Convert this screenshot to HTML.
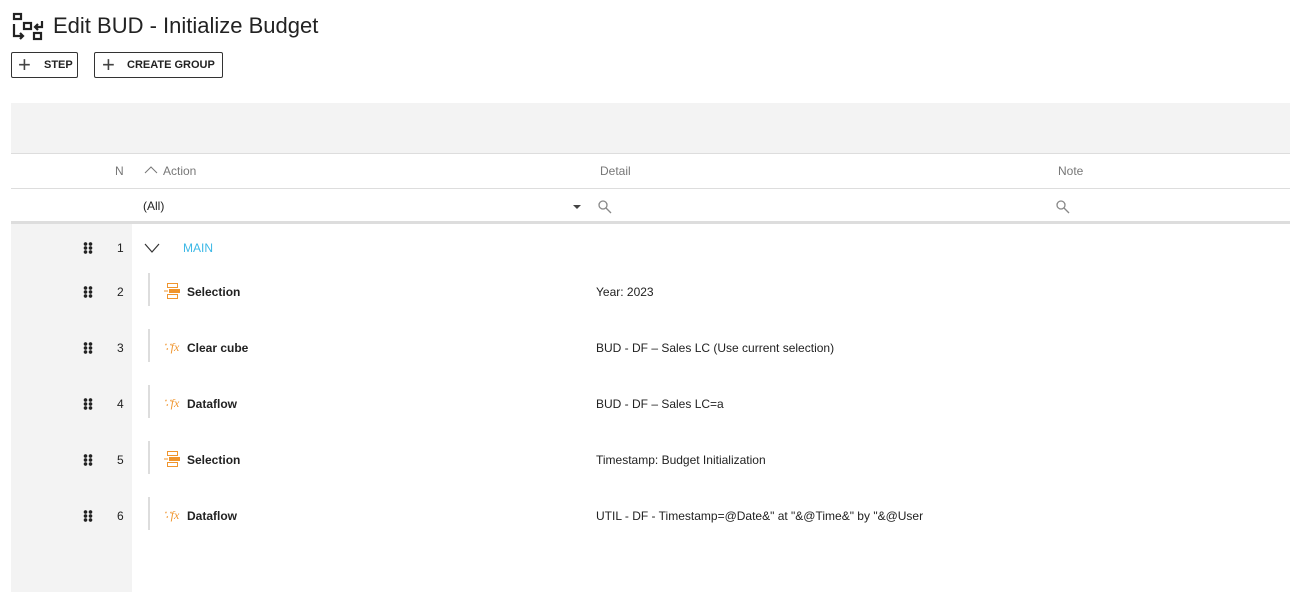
<!DOCTYPE html><html><head><style>
body{margin:0;width:1290px;height:592px;background:#fff;font-family:"Liberation Sans",sans-serif;position:relative;overflow:hidden;color:#222}
.a{position:absolute}
.btn{position:absolute;top:52px;border:1px solid #333;border-radius:2px;font-size:11px;font-weight:bold;line-height:24px;box-sizing:border-box;height:26px}
.t{font-size:12px}
.b{font-weight:bold}
.g{color:#777;font-size:12px}
.dots{position:absolute;left:83px;width:10px;height:12px;background:radial-gradient(circle,#222 1.6px,transparent 2px) 0 0/5px 4px}
</style></head><body>
<svg class="a" style="left:12px;top:12px" width="32" height="29" viewBox="0 0 32 29" fill="none" stroke="#222" stroke-width="2.2">
<rect x="2" y="2" width="7" height="5"/><rect x="12" y="11" width="7" height="6"/><rect x="22" y="21" width="7" height="6"/>
<path d="M2 12v12h9M8 21l3 3-3 3"/><path d="M30 9v6h-7M26 12l-3 3 3 3"/></svg>
<div class="a" style="left:53px;top:13px;font-size:22px;color:#222">Edit BUD - Initialize Budget</div>
<div class="btn" style="left:11px;width:67px"><span style="font-size:22px;font-weight:normal;position:absolute;left:6px;top:0px;color:#444">+</span><span style="position:absolute;left:32px">STEP</span></div>
<div class="btn" style="left:94px;width:129px"><span style="font-size:22px;font-weight:normal;position:absolute;left:7px;top:0px;color:#444">+</span><span style="position:absolute;left:32px">CREATE GROUP</span></div>
<div class="a" style="left:11px;top:103px;width:1279px;height:50px;background:#f3f3f3;border-bottom:1px solid #ddd"></div>
<div class="a g" style="left:115px;top:164px">N</div>
<svg class="a" style="left:144px;top:165px" width="14" height="9"><path d="M1 8l6-6 6 6" fill="none" stroke="#777"/></svg>
<div class="a g" style="left:163px;top:164px">Action</div>
<div class="a g" style="left:600px;top:164px">Detail</div>
<div class="a g" style="left:1058px;top:164px">Note</div>
<div class="a" style="left:11px;top:188px;width:1279px;height:1px;background:#ddd"></div>
<div class="a t" style="left:143px;top:199px">(All)</div>
<div class="a" style="left:573px;top:205px;border:4px solid transparent;border-top:4px solid #444;border-bottom:0"></div>
<svg class="a" style="left:598px;top:200px" width="14" height="14"><circle cx="5" cy="5" r="4" fill="none" stroke="#888" stroke-width="1.3"/><path d="M8 8l5 5" stroke="#888" stroke-width="1.3"/></svg>
<svg class="a" style="left:1056px;top:200px" width="14" height="14"><circle cx="5" cy="5" r="4" fill="none" stroke="#888" stroke-width="1.3"/><path d="M8 8l5 5" stroke="#888" stroke-width="1.3"/></svg>
<div class="a" style="left:11px;top:221px;width:1279px;height:3px;background:#ddd"></div>
<div class="a" style="left:11px;top:224px;width:121px;height:368px;background:#f3f3f3"></div>

<div class="dots" style="top:242px"></div><div class="a t" style="left:117px;top:241px">1</div>
<svg class="a" style="left:144px;top:243px" width="16" height="10"><path d="M1 1l7 8 7-8" fill="none" stroke="#333" stroke-width="1.2"/></svg>
<div class="a t" style="left:183px;top:241px;color:#3cb8e6">MAIN</div>

<div id="rows"></div>
<script>
var r=[["Selection","Year: 2023",0],["Clear cube","BUD - DF – Sales LC (Use current selection)",1],["Dataflow","BUD - DF – Sales LC=a",1],["Selection","Timestamp: Budget Initialization",0],["Dataflow","UTIL - DF - Timestamp=@Date&\" at \"&@Time&\" by \"&@User",1]];
var h="";r.forEach(function(x,i){var y=291+56*i;
h+='<div class="dots" style="top:'+(y-5)+'px"></div><div class="a t" style="left:117px;top:'+(y-6)+'px">'+(i+2)+'</div>';
h+='<div class="a" style="left:148px;top:'+(y-18)+'px;width:2px;height:33px;background:#ddd"></div>';
if(x[2])h+='<div class="a" style="left:163px;top:'+(y-7)+'px;font-size:12px;font-style:italic;color:#f0952d;font-family:Liberation Serif,serif">&#x2235;<i>fx</i></div>';
else h+='<svg class="a" style="left:164px;top:'+(y-9)+'px" width="17" height="18"><rect x="3.5" y="1.5" width="10" height="4" fill="none" stroke="#f0952d"/><rect x="5" y="7" width="11" height="4" fill="#f0952d"/><rect x="3.5" y="12.5" width="10" height="4" fill="none" stroke="#f0952d"/><path d="M0 9h4" stroke="#f0952d"/></svg>';
h+='<div class="a t b" style="left:187px;top:'+(y-6)+'px">'+x[0]+'</div><div class="a t" style="left:596px;top:'+(y-6)+'px">'+x[1].replace(/&/g,"&amp;")+'</div>';});
document.getElementById("rows").innerHTML=h;
</script>
</body></html>
